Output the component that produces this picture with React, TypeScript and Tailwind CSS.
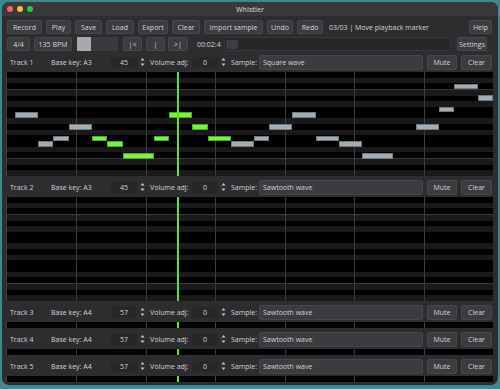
import clsx from "clsx";

// [startUnit, lengthUnits, row, playing]
const NOTES: [number, number, number, boolean][] = [
  [1, 3, 7, false],
  [4, 2, 12, false],
  [6, 2, 11, false],
  [8, 3, 9, false],
  [11, 2, 11, true],
  [13, 2, 12, true],
  [15, 4, 14, true],
  [19, 2, 11, true],
  [21, 3, 7, true],
  [24, 2, 9, true],
  [26, 3, 11, true],
  [29, 3, 12, false],
  [32, 2, 11, false],
  [34, 3, 9, false],
  [37, 3, 7, false],
  [40, 3, 11, false],
  [43, 3, 12, false],
  [46, 4, 14, false],
  [53, 3, 9, false],
  [56, 2, 6, false],
  [58, 3, 2, false],
  [61, 2, 4, false],
];

const UNITS = 63;
const ROWS = 18;
const PLAYHEAD = 22;
// semitone rows from B4 down to F#3
const SHARP_ROWS = new Set([1, 3, 5, 8, 10, 13, 15, 17]);
const OCTAVE_ROWS = new Set([2, 14]);

const TRACKS = [
  { name: "Track 1", key: "A3", num: 45, sample: "Square wave", notes: NOTES, tall: true },
  { name: "Track 2", key: "A3", num: 45, sample: "Sawtooth wave", notes: [], tall: true },
  { name: "Track 3", key: "A4", num: 57, sample: "Sawtooth wave", notes: [], tall: false },
  { name: "Track 4", key: "A4", num: 57, sample: "Sawtooth wave", notes: [], tall: false },
  { name: "Track 5", key: "A4", num: 57, sample: "Sawtooth wave", notes: [], tall: false },
];

function Btn({ children, className }: { children: React.ReactNode; className?: string }) {
  return (
    <div
      className={clsx(
        "flex shrink-0 items-center justify-center rounded-[2px] border border-[#47474c] bg-[#3b3b40] text-[#d4d4d4]",
        className,
      )}
    >
      {children}
    </div>
  );
}

function SpinArrows() {
  return (
    <svg width="5" height="10" viewBox="0 0 5 10" className="ml-[3px] shrink-0">
      <path d="M2.5 1 L4.5 3.6 L0.5 3.6 Z" fill="#c4c4c4" />
      <path d="M2.5 9 L4.5 6.4 L0.5 6.4 Z" fill="#c4c4c4" />
    </svg>
  );
}

function Roll({ notes }: { notes: [number, number, number, boolean][] }) {
  return (
    <div className="relative h-[104px] w-full">
      <div className="flex h-full flex-col">
        {Array.from({ length: ROWS }, (_, k) => (
          <div
            key={k}
            className={clsx(
              "flex-1",
              SHARP_ROWS.has(k) ? "bg-[#1a1a1a]" : "bg-black",
              OCTAVE_ROWS.has(k) && "border-b border-[#3a3a3a]",
            )}
          />
        ))}
      </div>
      {[1, 2, 3, 4, 5, 6].map((m) => (
        <div
          key={m}
          className="absolute top-0 h-full w-px bg-[#3c3c3c]"
          style={{ left: `${((m * 9) / UNITS) * 100}%` }}
        />
      ))}
      {notes.map(([u, w, k, on], i) => (
        <div
          key={i}
          className={clsx(
            "absolute border",
            on ? "border-[#4ea826] bg-[#7cf23e]" : "border-[#6f787f] bg-[#a3adb4]",
          )}
          style={{
            left: `${(u / UNITS) * 100}%`,
            width: `${(w / UNITS) * 100}%`,
            top: `${(k / ROWS) * 100}%`,
            height: `${100 / ROWS}%`,
          }}
        />
      ))}
      <div
        className="absolute top-0 h-full w-[2px] bg-[#5fe02c]"
        style={{ left: `${(PLAYHEAD / UNITS) * 100}%` }}
      />
    </div>
  );
}

function Track({ t }: { t: (typeof TRACKS)[number] }) {
  return (
    <div className="flex flex-col">
      <div className="flex h-[20px] items-center pl-[4px] pr-px text-[#d2d2d2]">
        <span className="w-[41px] shrink-0">{t.name}</span>
        <span className="w-[60px] shrink-0">Base key: {t.key}</span>
        <div className="flex h-[11px] w-[26px] shrink-0 items-center justify-center bg-[#27272a]">
          {t.num}
        </div>
        <SpinArrows />
        <span className="ml-[5px] w-[42px] shrink-0">Volume adj:</span>
        <div className="flex h-[11px] w-[26px] shrink-0 items-center justify-center bg-[#27272a]">
          0
        </div>
        <SpinArrows />
        <span className="ml-[5px] w-[28px] shrink-0">Sample:</span>
        <div className="flex h-[15px] min-w-0 flex-1 items-center rounded-[2px] border border-[#47474c] bg-[#3b3b40] pl-[3px]">
          {t.sample}
        </div>
        <Btn className="ml-[4px] h-[15px] w-[30px]">Mute</Btn>
        <Btn className="ml-[4px] h-[15px] w-[31px]">Clear</Btn>
      </div>
      <div className={clsx("overflow-hidden border-l border-[#3e3e42]", t.tall ? "h-[104px]" : "h-[6px]")}>
        <Roll notes={t.notes} />
      </div>
    </div>
  );
}

export default function App() {
  return (
    <div
      className="h-[389px] w-[500px] bg-[#3c8a8e] px-[2px] pt-[2px] text-[7px] leading-none"
      style={{ fontFamily: '"Open Sans", "Noto Sans", sans-serif' }}
    >
      <div className="flex h-[383px] flex-col overflow-hidden rounded-[7px] bg-[#2d2d30]">
        <div className="relative flex h-[14px] shrink-0 items-center bg-[#39393c] pl-[5px]">
          <div className="flex gap-[4px]">
            <span className="h-[6px] w-[6px] rounded-full bg-[#fe5f57]" />
            <span className="h-[6px] w-[6px] rounded-full bg-[#febc2e]" />
            <span className="h-[6px] w-[6px] rounded-full bg-[#28c840]" />
          </div>
          <span className="absolute left-1/2 -translate-x-1/2 font-semibold text-[#bdbdbd]">Whistler</span>
        </div>

        <div className="mt-[4px] flex h-[14px] shrink-0 items-stretch gap-[4px] pl-[5px] pr-[6px]">
          <Btn className="w-[35px]">Record</Btn>
          <Btn className="w-[25px]">Play</Btn>
          <Btn className="w-[27px]">Save</Btn>
          <Btn className="w-[28px]">Load</Btn>
          <Btn className="w-[30px]">Export</Btn>
          <Btn className="w-[28px]">Clear</Btn>
          <Btn className="w-[59px]">Import sample</Btn>
          <Btn className="w-[26px]">Undo</Btn>
          <Btn className="w-[26px]">Redo</Btn>
          <span className="ml-[2px] self-center text-[#d4d4d4]">03/03 | Move playback marker</span>
          <Btn className="ml-auto w-[23px]">Help</Btn>
        </div>

        <div className="mt-[3px] flex h-[14px] shrink-0 items-stretch pl-[5px] pr-[11px]">
          <Btn className="w-[23px]">4/4</Btn>
          <Btn className="ml-[4px] w-[38px]">135 BPM</Btn>
          <div className="ml-[5px] flex w-[41px] shrink-0 bg-[#3a3a3e]">
            <div className="w-[14px] bg-[#a9a9ab]" />
          </div>
          <Btn className="ml-[5px] w-[19px]">|&lt;</Btn>
          <Btn className="ml-[4px] w-[19px]">|</Btn>
          <Btn className="ml-[3px] w-[20px]">&gt;|</Btn>
          <span className="ml-[9px] w-[24px] shrink-0 self-center text-[#d4d4d4]">00:02:4</span>
          <div className="ml-[3px] flex flex-1 items-center rounded-[2px] border border-[#38383c] bg-[#27272a] pl-px">
            <div className="h-[9px] w-[12px] rounded-[2px] bg-[#3e3e42]" />
          </div>
          <Btn className="ml-[6px] w-[30px]">Settings</Btn>
        </div>

        <div className="mt-px flex flex-col gap-px pl-[4px] pr-[5px]">
          {TRACKS.map((t) => (
            <Track key={t.name} t={t} />
          ))}
        </div>
      </div>
    </div>
  );
}
